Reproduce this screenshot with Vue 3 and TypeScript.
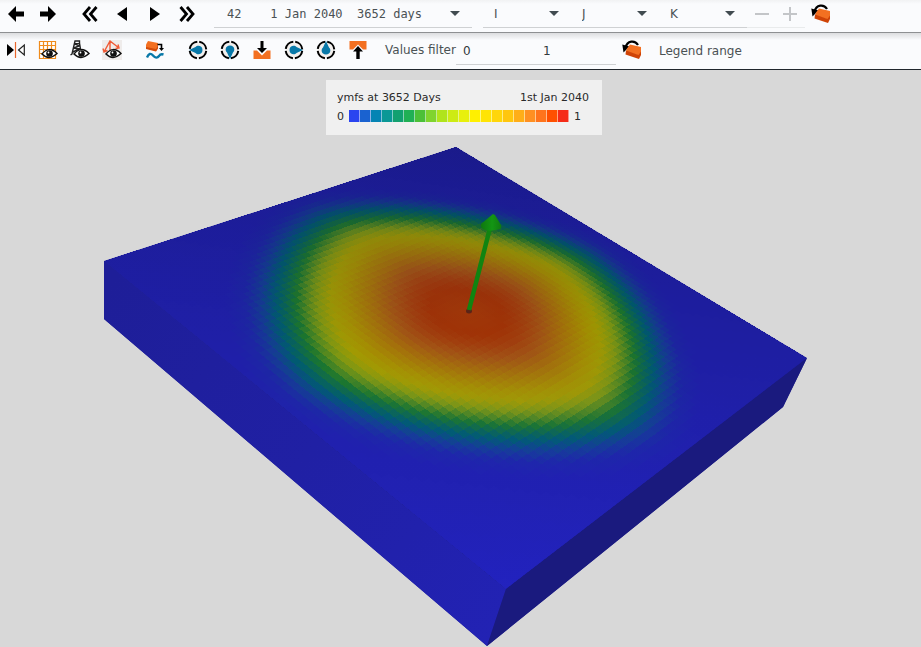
<script setup lang="ts">
import { ref } from 'vue'

interface Tool { icon: string; label: string }
interface Cell { points: string; fill: string }
type RGB = [number, number, number]

const eye =
  '<path d="M4 14Q11 5.500 19 13.500Q11 21 4 14Z" fill="#fff" stroke="#111" stroke-width="1.500"/>' +
  '<circle cx="11.500" cy="13.500" r="3.300" fill="#111"/><circle cx="10.500" cy="12.500" r=".9" fill="#fff"/>'
const ring =
  '<circle cx="10" cy="10" r="8.300" fill="#f3f0ee" stroke="#000" stroke-width="2" stroke-dasharray="11.040 2" stroke-dashoffset="-1"/>'
const drop = (angle: number) =>
  ring + `<path transform="rotate(${angle} 10 10)" d="M1 10L7.500 7C9 4.800 14.500 5 14.500 10S9 15.200 7.500 13Z" fill="#0878a8"/>`

const icons: Record<string, string> = {
  back: '<path d="M2 10L10 2V7.500H18V12.500H10V18Z"/>',
  forward: '<path d="M18 10L10 2V7.500H2V12.500H10V18Z"/>',
  first: '<path d="M10 3L4 10L10 17M16.500 3L10.500 10L16.500 17" fill="none" stroke="#000" stroke-width="2.800"/>',
  prev: '<path d="M5 10L15 3V17Z"/>',
  next: '<path d="M16 10L6 3V17Z"/>',
  last: '<path d="M4.500 3L10.500 10L4.500 17M11 3L17 10L11 17" fill="none" stroke="#000" stroke-width="2.800"/>',
  mirror:
    '<path d="M1 4L8 10L1 16Z"/><path d="M9.500 2V18" stroke="#e8662c" stroke-width="1.200"/><path d="M18.300 5V15L12.500 10Z" fill="#fff" stroke="#222" stroke-width="1.200"/>',
  grid:
    '<path d="M1.500 1.500H17.500V18.500H1.500ZM5.500 1.500V18.500M9.500 1.500V18.500M13.500 1.500V18.500M1.500 5.500H17.500M1.500 9.500H17.500M1.500 13.500H17.500" fill="#fff" stroke="#f08c1c" stroke-width="1.200"/>' + eye,
  well:
    '<path d="M4.500 1H9.500V3L11 12M5 1L2 14L.5 15M4.500 4L10 2.500M4 8L10 5.500M3 12L10 8.500M5 4L10 6M4 8L10.500 9.500" fill="none" stroke="#222" stroke-width="1.400"/>' + eye,
  fault:
    '<path d="M0 0H20V20H0Z" fill="#efeceb"/><path d="M2 12L8 1L17 8M8 1V10M1 8.500L2 12L5.500 10.500M13.500 8.500L17 8L16 4.500" fill="none" stroke="#f05a35" stroke-width="1.400"/>' + eye,
  export:
    '<path d="M3 1L13 3V8L11 11L1 8.500V4.500Z" fill="#f37021"/><path d="M1 7L11 9L13 5.500V8.500L11 11.500L1 9Z" fill="#d14b0a"/><path d="M12.500 4.500H16.500V9" fill="none" stroke="#000" stroke-width="1.600"/><path d="M14 8H19L16.500 11Z"/><path d="M2 17.500Q4.500 11.500 8 15.500T14 16Q15.500 13.500 18.500 14.500" fill="none" stroke="#0878a8" stroke-width="2.400"/>',
  dropLeft: drop(0),
  dropDown: drop(270),
  layerDown: '<path d="M1.500 10.500H5L10 15.500L15 10.500H18.500V19H1.500Z" fill="#f37021"/><path d="M8.500 1H11.500V8H15L10 13L5 8H8.500Z"/>',
  dropRight: drop(180),
  dropUp: drop(90),
  layerUp: '<path d="M1.500 1H18.500V9.500H15L10 4.500L5 9.500H1.500Z" fill="#f37021"/><path d="M10 6L15 11.500H11.700V19H8.300V11.500H5Z"/>',
  reset:
    '<path d="M3.500 8C5 0 13 0 16 5" fill="none" stroke="#000" stroke-width="2.200"/><path d="M.3 4.500L7.500 6.500L1.500 12.500Z"/><path d="M5 8.500L8 4.500L19 7L19 12.500L16.500 15.500L4 11.500Z" fill="#f37021"/><path d="M4 10.500L16.500 15L19 11.500V15L17 19L3.500 14.500Z" fill="#cf4306"/>',
  minus: '<path d="M3 10H17" stroke="#c3c5c8" stroke-width="2"/>',
  plus: '<path d="M3 10H17M10 3V17" stroke="#c3c5c8" stroke-width="2"/>',
}

const history: Tool[] = [
  { icon: 'back', label: 'Back' },
  { icon: 'forward', label: 'Forward' },
]
const playback: Tool[] = [
  { icon: 'first', label: 'First step' },
  { icon: 'prev', label: 'Previous step' },
  { icon: 'next', label: 'Next step' },
  { icon: 'last', label: 'Last step' },
]
const viewGroups: Tool[][] = [
  [
    { icon: 'mirror', label: 'Mirror' },
    { icon: 'grid', label: 'Show grid' },
    { icon: 'well', label: 'Show wells' },
    { icon: 'fault', label: 'Show faults' },
  ],
  [{ icon: 'export', label: 'Streamlines' }],
  [
    { icon: 'dropLeft', label: 'View left' },
    { icon: 'dropDown', label: 'View front' },
    { icon: 'layerDown', label: 'View bottom' },
    { icon: 'dropRight', label: 'View right' },
    { icon: 'dropUp', label: 'View back' },
    { icon: 'layerUp', label: 'View top' },
  ],
]

const nb = (s: string) => s.replace(/ /g, '\u00a0')
const step = nb('42    1 Jan 2040  3652 days')
const axes = ['I', 'J', 'K']
const minValue = ref('0')
const maxValue = ref('1')

const palette = [
  '#2a44f0', '#1a62d0', '#0584b4', '#0a9896', '#12a070', '#20b055', '#4cc038', '#80d42e', '#b0e41c', '#cdeb14',
  '#e8f00c', '#fff000', '#ffe404', '#ffd60a', '#ffc60e', '#ffae18', '#ff9022', '#ff741c', '#ff5000', '#f52c18',
]

/* Colour by distance from the well, in units of the block's side. */
const stops: [number, RGB][] = [
  [0, [160, 56, 8]],
  [0.08, [158, 50, 6]],
  [0.12, [158, 62, 14]],
  [0.16, [158, 82, 20]],
  [0.21, [160, 112, 10]],
  [0.26, [160, 140, 2]],
  [0.29, [156, 150, 2]],
  [0.32, [122, 146, 18]],
  [0.345, [68, 128, 34]],
  [0.362, [26, 114, 44]],
  [0.385, [10, 98, 82]],
  [0.402, [0, 88, 108]],
  [0.432, [20, 58, 142]],
  [0.462, [28, 36, 158]],
  [0.5, [30, 30, 162]],
]

function colourAt(r: number): RGB {
  for (let i = 1; i < stops.length; i++) {
    const [r1, c1] = stops[i]
    if (r <= r1) {
      const [r0, c0] = stops[i - 1]
      const t = (r - r0) / (r1 - r0)
      return [0, 1, 2].map((k) => c0[k] + (c1[k] - c0[k]) * t) as RGB
    }
  }
  return stops[stops.length - 1][1]
}

/* The front runs faster along the grid axes than across them. */
const centre = 0.49
const power = 1.64
const spread = (u: number, v: number) =>
  (Math.abs(u - centre) ** power + Math.abs(v - centre) ** power) ** (1 / power)

/* Perspective map of the unit square onto the block's top face. */
const [A, B, C, D] = [[104, 191], [456, 77], [807, 288], [506, 519]]
const dx1 = B[0] - C[0], dx2 = D[0] - C[0], sx = A[0] - B[0] + C[0] - D[0]
const dy1 = B[1] - C[1], dy2 = D[1] - C[1], sy = A[1] - B[1] + C[1] - D[1]
const det = dx1 * dy2 - dx2 * dy1
const g = (sx * dy2 - dx2 * sy) / det
const h = (dx1 * sy - sx * dy1) / det

function project(u: number, v: number): string {
  const w = g * u + h * v + 1
  const x = ((B[0] - A[0] + g * B[0]) * u + (D[0] - A[0] + h * D[0]) * v + A[0]) / w
  const y = ((B[1] - A[1] + g * B[1]) * u + (D[1] - A[1] + h * D[1]) * v + A[1]) / w
  return `${x.toFixed(1)},${y.toFixed(1)}`
}

const N = 65
const cells: Cell[] = []
for (let j = 0; j < N; j++) {
  for (let i = 0; i < N; i++) {
    const u = (i + 0.5) / N
    const v = (j + 0.5) / N
    const c = colourAt(spread(u, v))
    const light = 1 + 0.12 * (v - u)
    cells.push({
      points: [project(i / N, j / N), project((i + 1) / N, j / N), project((i + 1) / N, (j + 1) / N), project(i / N, (j + 1) / N)].join(' '),
      fill: `rgb(${c.map((k) => Math.round(k * light)).join(',')})`,
    })
  }
}
</script>

<template>
  <div class="viewer">
    <header class="bar steps">
      <div class="group">
        <button v-for="t in history" :key="t.icon" type="button" class="tool" :aria-label="t.label">
          <svg viewBox="0 0 20 20" v-html="icons[t.icon]" />
        </button>
      </div>
      <div class="group">
        <button v-for="t in playback" :key="t.icon" type="button" class="tool" :aria-label="t.label">
          <svg viewBox="0 0 20 20" v-html="icons[t.icon]" />
        </button>
      </div>
      <div class="pick date">
        <select aria-label="Time step"><option>{{ step }}</option></select>
        <svg class="arrow" viewBox="0 0 10 5"><path d="M0 0H10L5 5Z" /></svg>
      </div>
      <div class="axes">
        <div v-for="a in axes" :key="a" class="pick axis">
          <select :aria-label="a + ' slice'"><option>{{ a }}</option></select>
          <svg class="arrow" viewBox="0 0 10 5"><path d="M0 0H10L5 5Z" /></svg>
        </div>
        <div class="nudge">
          <button type="button" class="tool" aria-label="Decrease" disabled><svg viewBox="0 0 20 20" v-html="icons.minus" /></button>
          <button type="button" class="tool" aria-label="Increase" disabled><svg viewBox="0 0 20 20" v-html="icons.plus" /></button>
        </div>
      </div>
      <button type="button" class="tool" aria-label="Reset slices"><svg viewBox="0 0 20 20" v-html="icons.reset" /></button>
    </header>

    <div class="bar views">
      <div v-for="(tools, n) in viewGroups" :key="n" class="group">
        <button v-for="t in tools" :key="t.icon" type="button" class="tool" :aria-label="t.label">
          <svg viewBox="0 0 20 20" v-html="icons[t.icon]" />
        </button>
      </div>
      <div class="filter">
        <label for="filter-min">Values filter</label>
        <div class="range">
          <input id="filter-min" v-model="minValue" type="text" />
          <input v-model="maxValue" type="text" aria-label="Values filter maximum" />
        </div>
      </div>
      <button type="button" class="tool" aria-label="Reset filter"><svg viewBox="0 0 20 20" v-html="icons.reset" /></button>
      <button type="button" class="text-button">Legend range</button>
    </div>

    <main class="stage">
      <svg class="scene" viewBox="0 0 921 577" preserveAspectRatio="xMidYMid slice" role="img" aria-label="Reservoir block">
        <defs>
          <linearGradient id="side" gradientUnits="userSpaceOnUse" x1="104" y1="220" x2="500" y2="560">
            <stop offset="0" stop-color="#1e1e98" />
            <stop offset=".5" stop-color="#2020a4" />
            <stop offset="1" stop-color="#2222b4" />
          </linearGradient>
          <linearGradient id="sheen" gradientUnits="userSpaceOnUse" x1="430" y1="70" x2="480" y2="519">
            <stop offset="0" stop-color="#141464" stop-opacity=".1" />
            <stop offset=".45" stop-color="#1c1c90" stop-opacity="0" />
            <stop offset="1" stop-color="#2828ff" stop-opacity=".12" />
          </linearGradient>
          <linearGradient id="cone" x1="0" x2="1" y1="0" y2="0">
            <stop offset="0" stop-color="#0f780f" />
            <stop offset=".55" stop-color="#139613" />
            <stop offset="1" stop-color="#117a11" />
          </linearGradient>
        </defs>
        <polygon points="104,191 456,77 807,288 783,337 487,576 104,249" fill="#1e1e96" />
        <g shape-rendering="crispEdges">
          <polygon v-for="(c, n) in cells" :key="n" :points="c.points" :fill="c.fill" />
        </g>
        <polygon points="104,191 456,77 807,288 506,519" fill="url(#sheen)" />
        <polygon points="104,191 506,519 487,576 104,249" fill="url(#side)" />
        <polygon points="807,288 783,337 487,576 506,519" fill="#1a1a7e" />
        <ellipse cx="469" cy="241" rx="3" ry="2.500" fill="#5a2418" />
        <path d="M469 240L490 158" stroke="#118411" stroke-width="4.500" />
        <path d="M493 144L481 154Q480 158 485 160T500 159Q502 158 501 155L495 145Z" fill="url(#cone)" />
      </svg>

      <section class="legend">
        <div class="caption"><span>ymfs at 3652 Days</span><span>1st Jan 2040</span></div>
        <div class="scale">
          <span>0</span>
          <div class="swatches"><i v-for="p in palette" :key="p" :style="{ backgroundColor: p }" /></div>
          <span>1</span>
        </div>
      </section>
    </main>
  </div>
</template>

<style>
body {
  margin: 0;
}
</style>

<style scoped>
.viewer {
  display: flex;
  flex-direction: column;
  height: 100vh;
  overflow: hidden;
  background: #d8d8d8;
  color: #4a5154;
  font-family: "DejaVu Sans", sans-serif;
  font-size: 12px;
}
.bar {
  display: flex;
  flex: none;
  box-sizing: border-box;
  background: #fafbfd;
}
.steps {
  height: 33px;
  padding-left: 4px;
  border-bottom: 1px solid #8e9092;
  background: linear-gradient(#f1f2f3, #fafbfd 4px);
}
.views {
  height: 37px;
  padding-left: 4px;
  border-bottom: 1px solid #20262c;
  background: linear-gradient(#dcdddf, #fafbfd 7px);
}
.group {
  display: flex;
  gap: 8px;
}
.steps .group + .group {
  margin: 0 16px 0 18px;
}
.views .group {
  margin-right: 19px;
}
.views .group:nth-child(3) {
  margin-right: 15px;
}
.tool {
  display: grid;
  place-items: center;
  width: 24px;
  height: 27px;
  padding: 0;
  border: 0;
  background: none;
}
.views .tool {
  height: 34px;
}
.tool svg {
  width: 20px;
  height: 20px;
}
.pick {
  position: relative;
  box-sizing: border-box;
  height: 28px;
  border-bottom: 1px solid #cfd1d3;
}
.pick select {
  width: 100%;
  height: 27px;
  padding: 0 0 0 11px;
  border: 0;
  appearance: none;
  background: none;
  color: inherit;
  font: inherit;
}
.arrow {
  position: absolute;
  top: 11px;
  right: 12px;
  width: 10px;
  height: 5px;
  fill: #414b50;
  pointer-events: none;
}
.date {
  width: 258px;
  margin-right: 11px;
}
.date select {
  padding-left: 13px;
  font-family: "DejaVu Sans Mono", monospace;
}
.axes {
  display: flex;
  margin-right: 4px;
}
.axis {
  width: 88px;
}
.nudge {
  display: flex;
  gap: 4px;
  box-sizing: border-box;
  height: 28px;
  padding: 0 3px;
  border-bottom: 1px solid #e9ebec;
}
.filter {
  display: flex;
  margin-right: 4px;
}
.filter label {
  width: 71px;
  line-height: 35px;
}
.range {
  display: flex;
  box-sizing: border-box;
  height: 32px;
  border-bottom: 1px solid #cfd1d3;
}
.range input {
  box-sizing: border-box;
  width: 80px;
  padding: 4px 0 0 7px;
  border: 0;
  background: none;
  color: #33393c;
  font: inherit;
}
.text-button {
  height: 35px;
  margin-left: 15px;
  padding: 0;
  border: 0;
  background: none;
  color: inherit;
  font: inherit;
}
.stage {
  display: grid;
  flex: 1;
  grid-template: minmax(0, 1fr) / minmax(0, 1fr);
  min-height: 0;
}
.scene {
  grid-area: 1 / 1;
  width: 100%;
  height: 100%;
}
.legend {
  z-index: 1;
  grid-area: 1 / 1;
  place-self: start center;
  box-sizing: border-box;
  width: 276px;
  margin: 10px 0 0 7px;
  padding: 11px 13px 11px 11px;
  background: #f0f0f0;
  color: #2a2a2a;
  font-size: 11px;
  line-height: 14px;
}
.caption {
  display: flex;
  justify-content: space-between;
}
.scale {
  display: flex;
  gap: 5px;
  align-items: flex-start;
  margin-top: 5px;
}
.swatches {
  display: flex;
}
.swatches i {
  box-sizing: border-box;
  width: 11px;
  height: 12px;
  border-right: 1px solid rgb(255 255 255 / 50%);
}
</style>
